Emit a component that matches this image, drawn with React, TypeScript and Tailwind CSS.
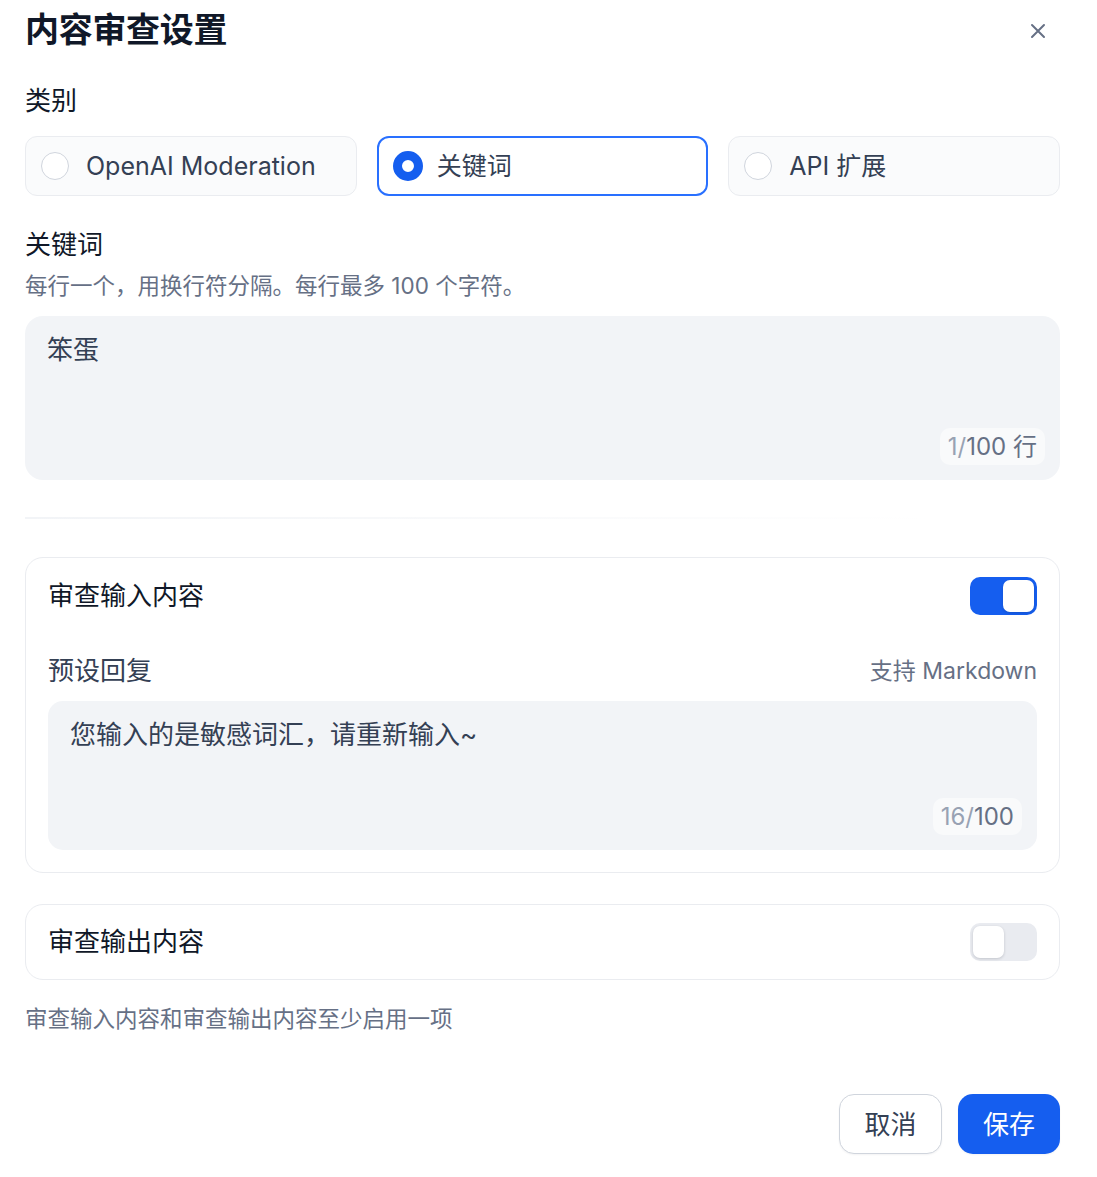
import { useState } from 'react'

const font = "font-['Inter','Noto_Sans_CJK_SC',sans-serif]"

function Radio({ checked }: { checked: boolean }) {
  if (checked) {
    return <span className="w-[30px] h-[30px] rounded-full border-[9px] border-[#155eef] bg-white flex-shrink-0" />
  }
  return <span className="w-[28px] h-[28px] rounded-full border border-[#d0d5dd] bg-white flex-shrink-0 ml-[1px] mr-[1px]" />
}

function Toggle({ on }: { on: boolean }) {
  return (
    <div
      className={
        on
          ? 'w-[67px] h-[38px] rounded-[10px] bg-[#155eef] p-[3px] flex justify-end'
          : 'w-[67px] h-[38px] rounded-[10px] bg-[#e9ebf0] p-[3px] flex justify-start'
      }
    >
      <span className="w-[31px] h-[32px] rounded-[7px] bg-white shadow-[0_1px_3px_rgba(16,24,40,0.18)]" />
    </div>
  )
}

function Counter({ used, total }: { used: string; total: string }) {
  return (
    <div className="self-end mr-[-7px] h-[37px] px-[8px] rounded-[10px] bg-[#f9fafb] flex items-center text-[24px] text-[#667085]">
      <span className="text-[#98a2b3]">{used}/</span>
      <span>{total}</span>
    </div>
  )
}

export default function App() {
  const [type] = useState('keywords')

  const types = [
    { key: 'openai', label: 'OpenAI Moderation' },
    { key: 'keywords', label: '关键词' },
    { key: 'api', label: 'API 扩展' },
  ]

  return (
    <div className={`${font} bg-white w-[1097px] min-h-[1177px] pl-[25px] pr-[37px] pt-[8px] text-[#101828]`}>
      {/* Header */}
      <div className="flex items-center justify-between h-[44px]">
        <h1 className="text-[34px] leading-[44px] font-bold tracking-[-0.3px]">内容审查设置</h1>
        <svg width="16" height="16" viewBox="0 0 16 16" className="mr-[14px] mt-[2px] text-[#667085]">
          <path d="M2 2l12 12M14 2L2 14" stroke="currentColor" strokeWidth="2" strokeLinecap="round" />
        </svg>
      </div>

      {/* Type */}
      <div className="mt-[31px] text-[26px] leading-[36px]">类别</div>
      <div className="mt-[17px] grid grid-cols-3 gap-[20px]">
        {types.map(t => (
          <div
            key={t.key}
            className={
              t.key === type
                ? 'h-[60px] rounded-[12px] border-2 border-[#2970ff] bg-white flex items-center gap-[14px] px-[14px]'
                : 'h-[60px] rounded-[12px] border border-[#eaecf0] bg-[#fafbfc] flex items-center gap-[16px] px-[14px]'
            }
          >
            <Radio checked={t.key === type} />
            <span className="text-[25px] text-[#344054] leading-[36px]">{t.label}</span>
          </div>
        ))}
      </div>

      {/* Keywords */}
      <div className="mt-[31px] text-[26px] leading-[36px]">关键词</div>
      <div className="mt-[7px] text-[22.5px] leading-[32px] text-[#667085]">每行一个，用换行符分隔。每行最多 100 个字符。</div>
      <div className="mt-[14px] h-[164px] rounded-[18px] bg-[#f2f4f7] flex flex-col justify-between px-[22px] pt-[16px] pb-[15px]">
        <div className="text-[26px] leading-[36px] text-[#344054]">笨蛋</div>
        <Counter used="1" total="100 行" />
      </div>

      {/* Divider */}
      <div className="mt-[37px] h-[2px] w-[905px] bg-gradient-to-r from-[#f2f4f7] to-transparent" />

      {/* Input card */}
      <div className="mt-[38px] rounded-[18px] border border-[#eaecf0] px-[22px] pt-[19px] pb-[22px]">
        <div className="flex items-center justify-between h-[38px]">
          <span className="text-[26px] leading-[36px]">审查输入内容</span>
          <Toggle on />
        </div>
        <div className="mt-[38px] flex items-center justify-between h-[36px]">
          <span className="text-[26px] leading-[36px] text-[#344054]">预设回复</span>
          <span className="text-[23px] leading-[36px] text-[#667085]">支持 Markdown</span>
        </div>
        <div className="mt-[12px] h-[149px] rounded-[15px] bg-[#f2f4f7] flex flex-col justify-between px-[22px] pt-[16px] pb-[15px]">
          <div className="text-[26px] leading-[36px] text-[#344054]">您输入的是敏感词汇，请重新输入~</div>
          <Counter used="16" total="100" />
        </div>
      </div>

      {/* Output card */}
      <div className="mt-[31px] rounded-[18px] border border-[#eaecf0] px-[22px] py-[18px]">
        <div className="flex items-center justify-between h-[38px]">
          <span className="text-[26px] leading-[36px]">审查输出内容</span>
          <Toggle on={false} />
        </div>
      </div>

      <div className="mt-[23px] text-[22.5px] leading-[32px] text-[#667085]">审查输入内容和审查输出内容至少启用一项</div>

      {/* Footer */}
      <div className="mt-[59px] flex justify-end gap-[16px]">
        <button className="h-[60px] w-[103px] rounded-[15px] border border-[#d0d5dd] bg-white text-[26px] text-[#344054] shadow-[0_1px_2px_rgba(16,24,40,0.05)]">
          取消
        </button>
        <button className="h-[60px] w-[102px] rounded-[15px] bg-[#155eef] text-[26px] text-white shadow-[0_1px_2px_rgba(16,24,40,0.05)]">
          保存
        </button>
      </div>
    </div>
  )
}
